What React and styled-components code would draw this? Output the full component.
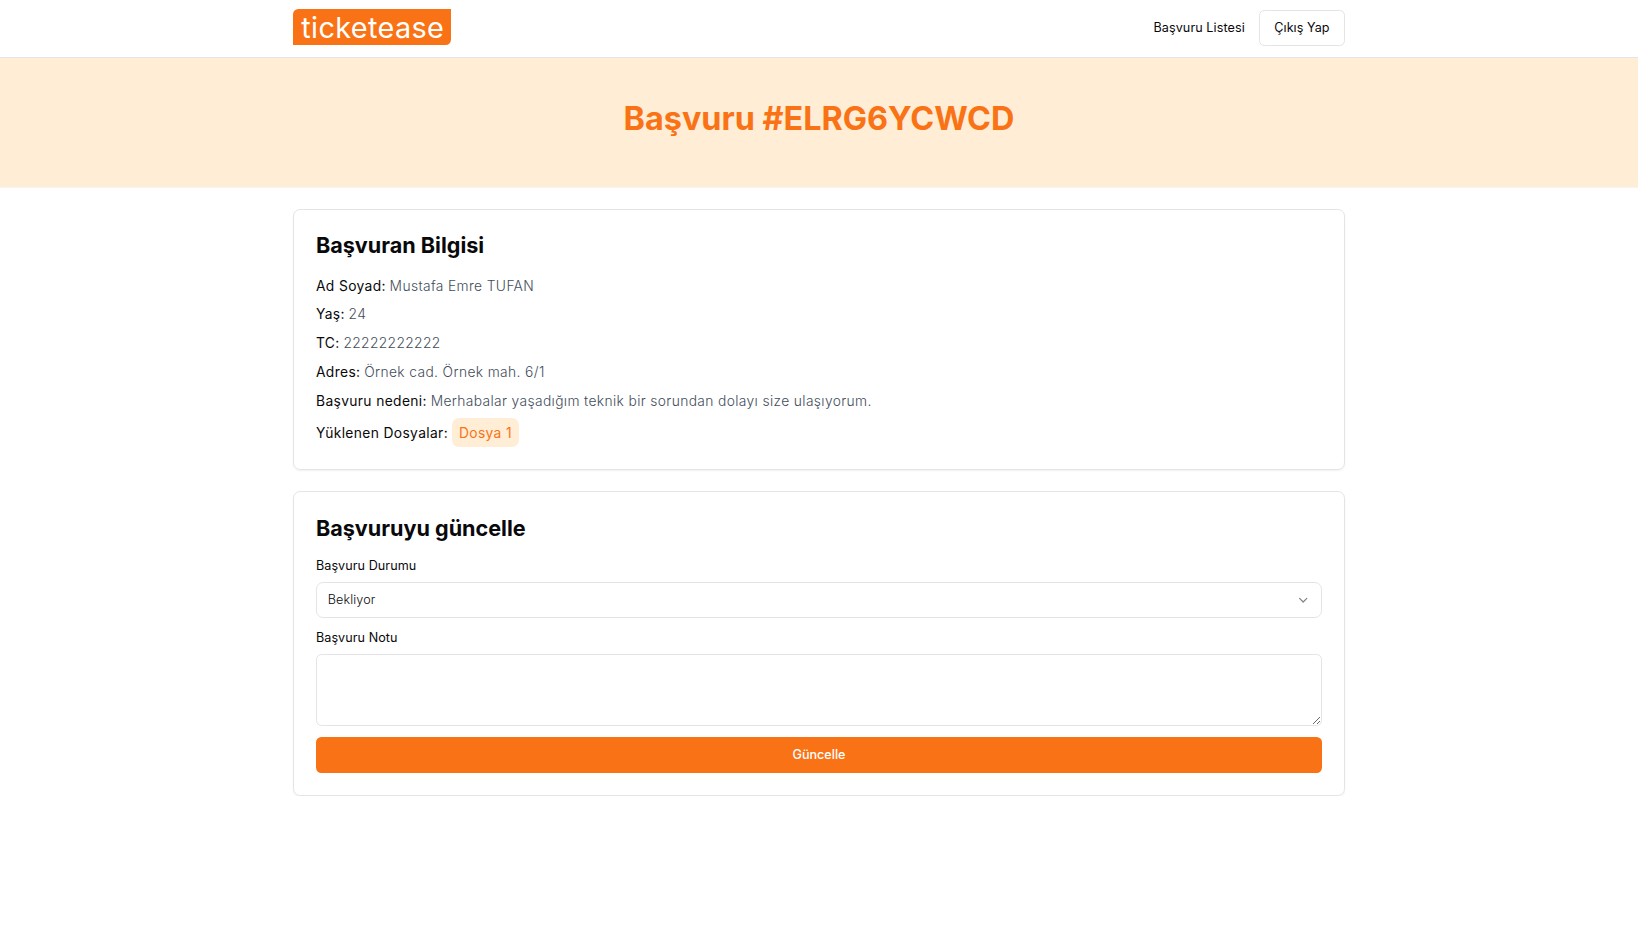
import React from "react";
import styled, { createGlobalStyle } from "styled-components";
import { ChevronDown } from "lucide-react";

const GlobalStyle = createGlobalStyle`
  *, *::before, *::after { box-sizing: border-box; }
  html { font-size: 14.4px; }
  body {
    margin: 0;
    background: #fff;
    color: #09090b;
    font-family: Inter, "Liberation Sans", sans-serif;
    line-height: 1.5;
  }
  h1, h2, p { margin: 0; }
  button, textarea { font-family: inherit; }
`;

const Container = styled.div`
  width: 100%;
  max-width: 75rem;
  margin: 0 auto;
  padding: 0 1rem;
`;

const Header = styled.header`
  height: 4rem;
  border-bottom: 1px solid #e4e4e7;
`;

const HeaderRow = styled(Container)`
  height: 100%;
  display: flex;
  align-items: center;
  justify-content: space-between;
`;

const Logo = styled.a`
  height: 2.5rem;
  margin-bottom: 0.2rem;
  padding: 0 0.48rem 0 0.55rem;
  border-radius: 0.375rem 0 0.375rem 0;
  background: #f97316;
  color: #fff;
  font-size: 2rem;
  font-weight: 400;
  letter-spacing: 0.38px;
  line-height: 2.6rem;
`;

const Nav = styled.nav`
  display: flex;
  align-items: center;
  gap: 1rem;
  font-size: 0.875rem;
  letter-spacing: 0.08px;
`;

const NavLink = styled.a`
  color: inherit;
`;

const Button = styled.button`
  height: 2.5rem;
  padding: 0 0.98rem;
  border-radius: 5.4px;
  border: ${(p) => (p.$primary ? "0" : "1px solid #e4e4e7")};
  background: ${(p) => (p.$primary ? "#f97316" : "#fff")};
  color: ${(p) => (p.$primary ? "#fff" : "#09090b")};
  font-size: 0.875rem;
  font-weight: ${(p) => (p.$primary ? 500 : 400)};
  line-height: 1.25rem;
  letter-spacing: ${(p) => (p.$primary ? "normal" : "0.04px")};
`;

const Hero = styled.section`
  padding: 3rem 1rem 3.5rem;
  border-bottom: 1px solid #f4f4f5;
  background: #ffedd5;
  text-align: center;
`;

const HeroTitle = styled.h1`
  color: #f97316;
  font-size: 2.25rem;
  line-height: 2.5rem;
  font-weight: 700;
`;

const Main = styled(Container)`
  display: flex;
  flex-direction: column;
  gap: 1.5rem;
  padding-top: calc(1.5rem - 1px);
`;

const Card = styled.section`
  padding: 1.5rem;
  border: 1px solid #e4e4e7;
  border-radius: 0.5rem;
  box-shadow: 0 1px 2px rgba(0, 0, 0, 0.06);
`;

const CardTitle = styled.h2`
  margin-bottom: 1rem;
  font-size: 1.5rem;
  line-height: 2rem;
  font-weight: 700;
`;

const Details = styled.div`
  display: flex;
  flex-direction: column;
  gap: 0.5rem;
  font-size: 13.8px;
  letter-spacing: 0.37px;
`;

const Detail = styled.p`
  height: ${(p) => (p.$tall ? "2rem" : "1.5rem")};
  display: flex;
  align-items: center;
  gap: 0.26rem;
  line-height: 1.5rem;
`;

const Term = styled.span`
  padding-top: 2px;
  font-weight: 400;
`;

const Value = styled.span`
  padding-top: 2px;
  color: #434d5b;
  font-weight: 300;
`;

const FileChip = styled.a`
  height: 2rem;
  padding: calc(0.25rem + 1px) 0.5rem 0;
  border-radius: 0.5rem;
  background: #ffedd5;
  color: #f97316;
`;

const Form = styled.form`
  display: flex;
  flex-direction: column;
  gap: 0.75rem;
`;

const Field = styled.div`
  display: flex;
  flex-direction: column;
  gap: 0.5rem;
  font-size: 0.875rem;
  line-height: 1.25rem;
  letter-spacing: 0.06px;
`;

const Label = styled.label`
  font-weight: 400;
`;

const Select = styled.button`
  height: 2.5rem;
  display: flex;
  align-items: center;
  justify-content: space-between;
  padding: 0 0.75rem 1px;
  border: 1px solid #e4e4e7;
  border-radius: 0.5rem;
  background: #fff;
  color: #09090b;
  font-size: 0.875rem;
  font-weight: 300;
  letter-spacing: 0.1px;

  svg {
    width: 1rem;
    height: 1rem;
    opacity: 0.5;
  }
`;

const TextArea = styled.textarea`
  display: block;
  width: 100%;
  height: 5rem;
  padding: 0.5rem 0.75rem;
  border: 1px solid #e4e4e7;
  border-radius: 5.4px;
  background: #fff;
  font-size: 0.875rem;
  resize: vertical;
`;

const details = [
  ["Ad Soyad:", "Mustafa Emre TUFAN"],
  ["Yaş:", "24"],
  ["TC:", "22222222222"],
  ["Adres:", "Örnek cad. Örnek mah. 6/1"],
  ["Başvuru nedeni:", "Merhabalar yaşadığım teknik bir sorundan dolayı size ulaşıyorum."],
];

export default function App() {
  return (
    <>
      <GlobalStyle />
      <Header>
        <HeaderRow>
          <Logo>ticketease</Logo>
          <Nav>
            <NavLink>Başvuru Listesi</NavLink>
            <Button type="button">Çıkış Yap</Button>
          </Nav>
        </HeaderRow>
      </Header>
      <Hero>
        <HeroTitle>Başvuru #ELRG6YCWCD</HeroTitle>
      </Hero>
      <Main as="main">
        <Card>
          <CardTitle>Başvuran Bilgisi</CardTitle>
          <Details>
            {details.map(([term, value]) => (
              <Detail key={term}>
                <Term>{term}</Term>
                <Value>{value}</Value>
              </Detail>
            ))}
            <Detail $tall>
              <Term>Yüklenen Dosyalar:</Term>
              <FileChip>Dosya 1</FileChip>
            </Detail>
          </Details>
        </Card>
        <Card>
          <CardTitle>Başvuruyu güncelle</CardTitle>
          <Form>
            <Field>
              <Label>Başvuru Durumu</Label>
              <Select type="button">
                Bekliyor
                <ChevronDown />
              </Select>
            </Field>
            <Field>
              <Label htmlFor="note">Başvuru Notu</Label>
              <TextArea id="note" />
            </Field>
            <Button type="button" $primary>
              Güncelle
            </Button>
          </Form>
        </Card>
      </Main>
    </>
  );
}
